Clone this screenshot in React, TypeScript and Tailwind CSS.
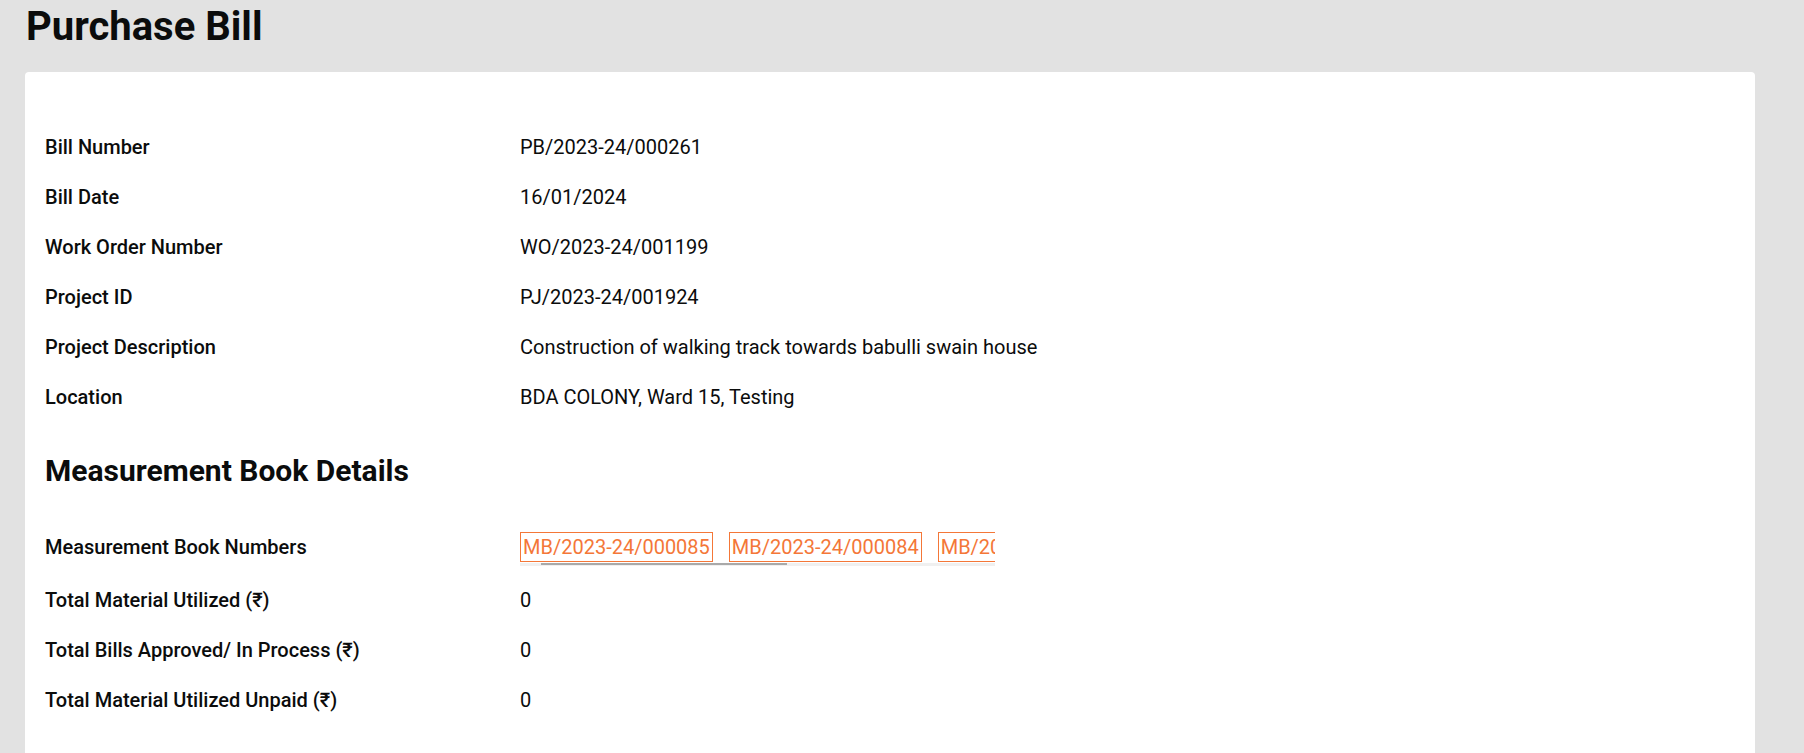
const details = [
  { label: "Bill Number", value: "PB/2023-24/000261" },
  { label: "Bill Date", value: "16/01/2024" },
  { label: "Work Order Number", value: "WO/2023-24/001199" },
  { label: "Project ID", value: "PJ/2023-24/001924" },
  { label: "Project Description", value: "Construction of walking track towards babulli swain house" },
  { label: "Location", value: "BDA COLONY, Ward 15, Testing" },
];

const totals = [
  { label: "Total Material Utilized (₹)", value: "0" },
  { label: "Total Bills Approved/ In Process (₹)", value: "0" },
  { label: "Total Material Utilized Unpaid (₹)", value: "0" },
];

const mbNumbers = ["MB/2023-24/000085", "MB/2023-24/000084", "MB/2023-24/000083", "MB/2023-24/000082"];

function Row({ label, value }: { label: string; value: string }) {
  return (
    <div className="flex h-[50px] items-center">
      <div className="w-[475px] shrink-0 font-medium">{label}</div>
      <div>{value}</div>
    </div>
  );
}

export default function App() {
  return (
    <div
      className="min-h-screen bg-[#e2e2e2] pl-[25px] text-[20px] text-[#0b0c0c]"
      style={{ fontFamily: "Roboto, 'Noto Sans', 'DejaVu Sans', sans-serif" }}
    >
      <h1 className="pt-[3px] pl-px text-[40px] leading-[48px] font-bold">Purchase Bill</h1>

      <div className="mt-[21px] w-[1730px] rounded-[4px] bg-white pt-[50px] pb-[40px] pl-[20px]">
        {details.map((d) => (
          <Row key={d.label} label={d.label} value={d.value} />
        ))}

        <h2 className="mt-[31px] text-[30px] leading-[36px] font-bold">Measurement Book Details</h2>

        {/* MB numbers, horizontally scrollable */}
        <div className="mt-[33px] flex items-start pt-[10px] pb-[9px]">
          <div className="flex h-[30px] w-[475px] shrink-0 items-center font-medium">Measurement Book Numbers</div>
          <div className="w-[475px]">
            <div className="flex h-[30px] overflow-hidden">
              {mbNumbers.map((mb) => (
                <span
                  key={mb}
                  className="mr-4 flex h-[30px] shrink-0 items-center border border-[#f47738] px-[2px] whitespace-nowrap text-[#f47738]"
                >
                  {mb}
                </span>
              ))}
            </div>
            <div className="h-[3px] bg-[#f0f0f0] pl-[21px]">
              <div className="mt-px h-[2px] w-[246px] bg-[#a9a9a9]" />
            </div>
          </div>
        </div>

        {totals.map((t) => (
          <Row key={t.label} label={t.label} value={t.value} />
        ))}
      </div>
    </div>
  );
}
